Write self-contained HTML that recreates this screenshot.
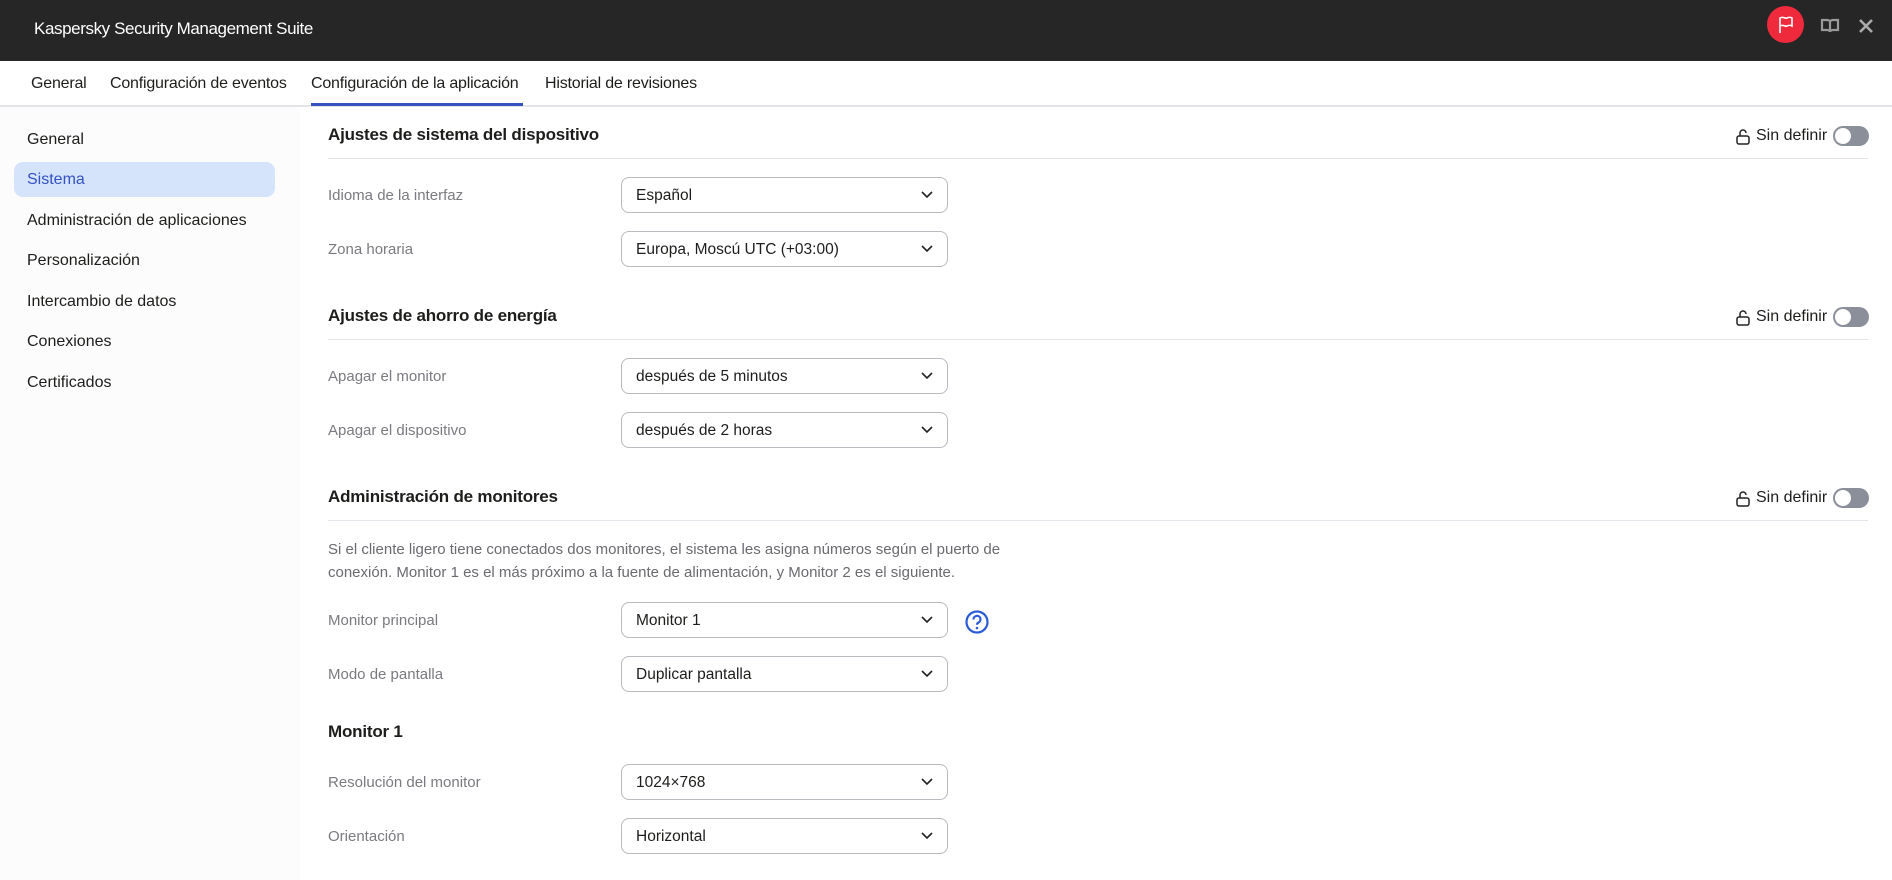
<!DOCTYPE html>
<html><head><meta charset="utf-8"><style>
*{box-sizing:border-box;margin:0;padding:0}
body{width:1892px;height:880px;overflow:hidden;background:#fff;font-family:"Liberation Sans",sans-serif;color:#1d1d1b;position:relative}
.hdr{position:absolute;left:0;top:0;width:1892px;height:61px;background:#262626}
.hdr .t{position:absolute;left:34px;top:19px;color:#fff;font-size:17px;letter-spacing:-0.4px}
.tabs{position:absolute;top:61px;left:0;width:1892px;height:46px;border-bottom:2px solid #e4e4e8}
.tab{position:absolute;top:14px;font-size:16px;color:#1d1d1b;letter-spacing:-0.2px}
.ul{position:absolute;left:311px;top:42px;width:212px;height:3px;background:#3452c4}
.side{position:absolute;left:0;top:107px;width:300px;height:773px;background:#fcfcfc}
.si{position:absolute;left:14px;width:261px;height:35px;border-radius:9px;font-size:16px;padding:9px 0 0 13px}
.si.a{background:#d5e3fb;color:#3452c4}
.sec{position:absolute;left:328px;width:1540px;font-size:17px;font-weight:bold;letter-spacing:-0.2px}
.line{position:absolute;left:328px;width:1540px;height:1px;background:#e4e4ea}
.lbl{position:absolute;left:328px;font-size:15px;color:#7a7a80}
.sel{position:absolute;left:621px;width:327px;height:36px;border:1px solid #b9b9c0;border-radius:8px;font-size:15.5px;padding:9px 0 0 14px}
.sel svg{position:absolute;right:14px;top:13px}
.sd{position:absolute;left:1736px;font-size:16px;color:#1d1d1b}
.sd .tg{position:absolute;left:97px;top:-1px;width:36px;height:20px;border-radius:10px;background:#8b8f99}
.sd .tg:after{content:"";position:absolute;left:2px;top:2px;width:16px;height:16px;border-radius:50%;background:#fff}
.p{position:absolute;left:328px;font-size:15px;color:#6a6a70;line-height:23px}
</style></head><body>
<div class="hdr"><div class="t">Kaspersky Security Management Suite</div>
<div style="position:absolute;left:1767px;top:6px;width:37px;height:37px;border-radius:50%;background:#ee2a3c"></div>
<svg style="position:absolute;left:1777px;top:15px" width="18" height="20" viewBox="0 0 18 20"><path d="M3 18V3c3-2 5 1 7 0s3-1 5 0v8c-2-1-3-1-5 0s-4-2-7 0" fill="none" stroke="#fff" stroke-width="1.6"/></svg>
<svg style="position:absolute;left:1820px;top:18px" width="20" height="16" viewBox="0 0 20 16"><path d="M2 2h5c2 0 3 1 3 2v10c0-1-1-2-3-2H2zM18 2h-5c-2 0-3 1-3 2v10c0-1 1-2 3-2h5z" fill="none" stroke="#9a9a9a" stroke-width="2.2"/></svg>
<svg style="position:absolute;left:1859px;top:19px" width="14" height="14" viewBox="0 0 14 14"><path d="M1 1L13 13M13 1L1 13" stroke="#aaa" stroke-width="2.6"/></svg>
</div>
<div class="tabs">
<div class="tab" style="left:31px">General</div>
<div class="tab" style="left:110px">Configuración de eventos</div>
<div class="tab" style="left:311px">Configuración de la aplicación</div>
<div class="tab" style="left:545px">Historial de revisiones</div>
<div class="ul"></div></div>
<div class="side">
<div class="si" style="top:15px">General</div>
<div class="si a" style="top:55px">Sistema</div>
<div class="si" style="top:96px">Administración de aplicaciones</div>
<div class="si" style="top:136px">Personalización</div>
<div class="si" style="top:177px">Intercambio de datos</div>
<div class="si" style="top:217px">Conexiones</div>
<div class="si" style="top:258px">Certificados</div>
</div>

<div class="sec" style="top:125px">Ajustes de sistema del dispositivo</div>
<div class="line" style="top:158px"></div>
<div class="sd" style="top:127px"><svg width="14" height="16" viewBox="0 0 14 16" style="position:absolute;left:0;top:2px"><rect x="1" y="7" width="12" height="8" rx="2" fill="none" stroke="#222" stroke-width="1.5"/><path d="M4 7V4a3 3 0 0 1 6 0" fill="none" stroke="#222" stroke-width="1.5"/></svg><span style="position:absolute;left:20px;white-space:nowrap">Sin definir</span><div class="tg"></div></div>
<div class="lbl" style="top:187px">Idioma de la interfaz</div>
<div class="sel" style="top:177px">Español<svg width="12" height="8"><path d="M1 1l5 5 5-5" fill="none" stroke="#222" stroke-width="1.6"/></svg></div>
<div class="lbl" style="top:241px">Zona horaria</div>
<div class="sel" style="top:231px">Europa, Moscú UTC (+03:00)<svg width="12" height="8"><path d="M1 1l5 5 5-5" fill="none" stroke="#222" stroke-width="1.6"/></svg></div>

<div class="sec" style="top:306px">Ajustes de ahorro de energía</div>
<div class="line" style="top:339px"></div>
<div class="sd" style="top:308px"><svg width="14" height="16" viewBox="0 0 14 16" style="position:absolute;left:0;top:2px"><rect x="1" y="7" width="12" height="8" rx="2" fill="none" stroke="#222" stroke-width="1.5"/><path d="M4 7V4a3 3 0 0 1 6 0" fill="none" stroke="#222" stroke-width="1.5"/></svg><span style="position:absolute;left:20px;white-space:nowrap">Sin definir</span><div class="tg"></div></div>
<div class="lbl" style="top:368px">Apagar el monitor</div>
<div class="sel" style="top:358px">después de 5 minutos<svg width="12" height="8"><path d="M1 1l5 5 5-5" fill="none" stroke="#222" stroke-width="1.6"/></svg></div>
<div class="lbl" style="top:422px">Apagar el dispositivo</div>
<div class="sel" style="top:412px">después de 2 horas<svg width="12" height="8"><path d="M1 1l5 5 5-5" fill="none" stroke="#222" stroke-width="1.6"/></svg></div>

<div class="sec" style="top:487px">Administración de monitores</div>
<div class="line" style="top:520px"></div>
<div class="sd" style="top:489px"><svg width="14" height="16" viewBox="0 0 14 16" style="position:absolute;left:0;top:2px"><rect x="1" y="7" width="12" height="8" rx="2" fill="none" stroke="#222" stroke-width="1.5"/><path d="M4 7V4a3 3 0 0 1 6 0" fill="none" stroke="#222" stroke-width="1.5"/></svg><span style="position:absolute;left:20px;white-space:nowrap">Sin definir</span><div class="tg"></div></div>
<div class="p" style="top:538px">Si el cliente ligero tiene conectados dos monitores, el sistema les asigna números según el puerto de<br>conexión. Monitor 1 es el más próximo a la fuente de alimentación, y Monitor 2 es el siguiente.</div>
<div class="lbl" style="top:612px">Monitor principal</div>
<div class="sel" style="top:602px">Monitor 1<svg width="12" height="8"><path d="M1 1l5 5 5-5" fill="none" stroke="#222" stroke-width="1.6"/></svg></div>
<svg style="position:absolute;left:965px;top:610px" width="24" height="24" viewBox="0 0 24 24"><circle cx="12" cy="12" r="10.5" fill="none" stroke="#2a5bd7" stroke-width="2.2"/><path d="M8.5 9.5a3.5 3.5 0 1 1 5 3c-1 .6-1.5 1.2-1.5 2.3" fill="none" stroke="#2a5bd7" stroke-width="2.2"/><circle cx="12" cy="18" r="1.3" fill="#2a5bd7"/></svg>
<div class="lbl" style="top:666px">Modo de pantalla</div>
<div class="sel" style="top:656px">Duplicar pantalla<svg width="12" height="8"><path d="M1 1l5 5 5-5" fill="none" stroke="#222" stroke-width="1.6"/></svg></div>

<div class="sec" style="top:722px">Monitor 1</div>
<div class="lbl" style="top:774px">Resolución del monitor</div>
<div class="sel" style="top:764px">1024×768<svg width="12" height="8"><path d="M1 1l5 5 5-5" fill="none" stroke="#222" stroke-width="1.6"/></svg></div>
<div class="lbl" style="top:828px">Orientación</div>
<div class="sel" style="top:818px">Horizontal<svg width="12" height="8"><path d="M1 1l5 5 5-5" fill="none" stroke="#222" stroke-width="1.6"/></svg></div>
</body></html>
